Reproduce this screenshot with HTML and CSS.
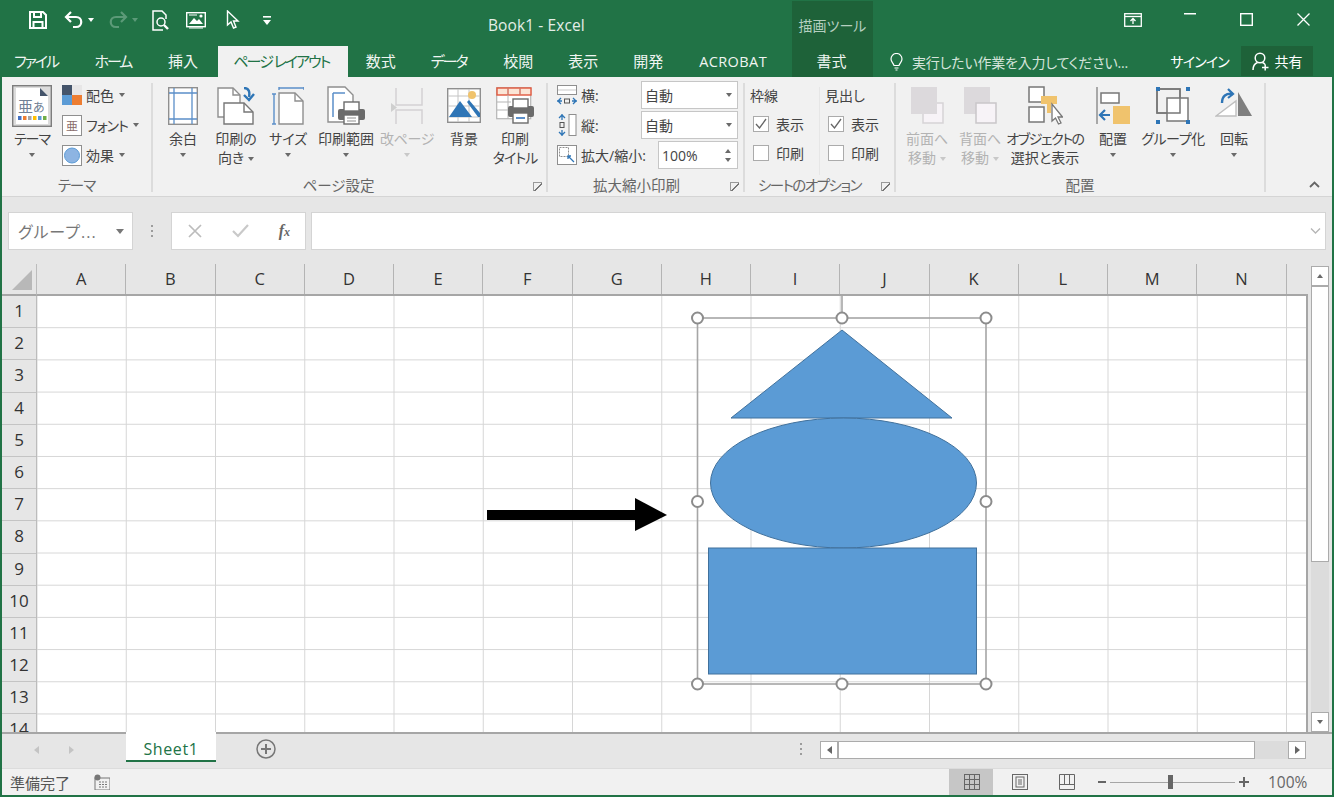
FILE: index.html
```html
<!DOCTYPE html>
<html lang="ja">
<head>
  <meta charset="UTF-8" />
  <title>Book1 - Excel</title>
  <link rel="stylesheet" href="styles.css">
</head>
<body>
<div class="app">

  <!-- title bar and tabs -->
  <div class="top">
    <div class="context">描画ツール</div>
    <div class="titlebar">
      <div class="qat">
        <svg width="18" height="18" viewBox="0 0 18 18" fill="none" stroke="#fff" stroke-width="2"><path d="M1 1h13l3 3v13H1z"/><path d="M5 1v5h7V1M4.500 17v-6h9v6"/></svg>
        <svg width="20" height="18" viewBox="0 0 20 18" fill="none" stroke="#fff" stroke-width="2.200"><path d="M7 1 2 6l5 5"/><path d="M2 6h10c7 0 7 10 0 10H9"/></svg>
        <i class="caret caret-white"></i>
        <svg width="20" height="18" viewBox="0 0 20 18" fill="none" stroke="#5c9a78" stroke-width="2.200"><path d="m13 1 5 5-5 5"/><path d="M18 6H8c-7 0-7 10 0 10h3"/></svg>
        <i class="caret caret-dim"></i>
        <svg width="18" height="21" viewBox="0 0 18 21" fill="none" stroke="#fff" stroke-width="1.500"><path d="M11 20H1V1h9l4 4v4"/><circle cx="9" cy="12" r="4"/><path d="m12 15 4 4" stroke-width="2.400"/></svg>
        <svg width="20" height="17" viewBox="0 0 20 17"><rect x=".7" y=".7" width="18.600" height="14" fill="none" stroke="#fff" stroke-width="1.400"/><path d="M3 12 8 6l3 3 2-2 4 5z" fill="#fff"/><circle cx="15" cy="4" r="1.600" fill="#fff"/><path d="M3 3h8M3 16h14" stroke="#fff"/></svg>
        <svg width="14" height="20" viewBox="0 0 14 20" fill="none" stroke="#fff" stroke-width="1.400"><path d="M1.500 1v14l3.500-3 2.500 6 2.500-1-2.500-6h4.500z"/></svg>
        <svg class="qat-more" width="8" height="9" viewBox="0 0 8 9" fill="#fff"><rect width="8" height="1.600"/><path d="M0 4h8L4 9z"/></svg>
      </div>
      <div class="doc-title">Book1 - Excel</div>
      <div class="win-btns">
        <span><svg width="18" height="14" viewBox="0 0 18 14" fill="none" stroke="#fff" stroke-width="1.300"><rect x=".7" y=".7" width="16.600" height="12.600"/><path d="M1 3.500h16"/><path d="M9 11V6M6.500 8 9 5.500 11.500 8"/></svg></span>
        <span class="win-min"><svg width="12" height="2" viewBox="0 0 12 2"><rect width="12" height="1.500" fill="#fff"/></svg></span>
        <span><svg width="13" height="13" viewBox="0 0 13 13"><rect x=".7" y=".7" width="11.600" height="11.600" fill="none" stroke="#fff" stroke-width="1.400"/></svg></span>
        <span><svg width="13" height="13" viewBox="0 0 13 13" stroke="#fff" stroke-width="1.300"><path d="m.5.500 12 12M12.500.500l-12 12"/></svg></span>
      </div>
    </div>
    <div class="tabs">
      <div class="tabs-main">
        <div class="tab tab-kana">ファイル</div>
        <div class="tab tab-kana">ホーム</div>
        <div class="tab">挿入</div>
        <div class="tab tab-kana tab-active">ページ レイアウト</div>
        <div class="tab">数式</div>
        <div class="tab tab-kana">データ</div>
        <div class="tab">校閲</div>
        <div class="tab">表示</div>
        <div class="tab">開発</div>
        <div class="tab tab-latin">ACROBAT</div>
      </div>
      <div class="tab tab-format">書式</div>
      <div class="tell-me">
        <svg width="13" height="18" viewBox="0 0 13 18" fill="none" stroke="#fff" stroke-width="1.200"><path d="M4 12.500C3.500 10 1 9 1 6a5.500 5.500 0 0 1 11 0c0 3-2.500 4-3 6.500z"/><path d="M4.500 15h4M5.500 17h2"/></svg>
        <span>実行したい作業を入力してください...</span>
      </div>
      <div class="signin">サインイン</div>
      <div class="share">
        <svg width="17" height="19" viewBox="0 0 17 19" fill="none" stroke="#fff" stroke-width="1.500"><circle cx="8" cy="6" r="4.800"/><path d="M1 18c0-4 2-6.500 4.500-7.500M10.500 10.500c1 .4 2 1 2.500 2M10 15.500h6.500M13.200 12.500v6"/></svg>
        <span>共有</span>
      </div>
    </div>
  </div>

  <!-- ribbon -->
  <div class="ribbon">
    <div class="group group-theme">
      <div class="group-body">
        <div class="big big-theme">
          <div class="big-icon">
            <svg width="40" height="42" viewBox="0 0 40 42">
              <rect x=".7" y=".7" width="38.600" height="40.600" fill="#dcdcdc" stroke="#7d7d7d" stroke-width="1.400"/>
              <path d="M4 3h24l8 8v28H4z" fill="#fff"/><path d="M28 3l8 8h-8z" fill="#44546a"/>
              <text x="6" y="27" class="theme-a">亜</text><text x="21" y="27" class="theme-b">あ</text>
              <g><rect x="6" y="31" width="3.500" height="4" fill="#4472c4"/><rect x="11" y="31" width="3.500" height="4" fill="#ed7d31"/><rect x="16" y="31" width="3.500" height="4" fill="#a5a5a5"/><rect x="21" y="31" width="3.500" height="4" fill="#ffc000"/><rect x="26" y="31" width="3.500" height="4" fill="#5b9bd5"/><rect x="31" y="31" width="3.500" height="4" fill="#70ad47"/></g>
            </svg>
          </div>
          <div class="big-label tight">テーマ</div>
          <i class="caret caret-block"></i>
        </div>
        <div class="small-list">
          <div class="small-row">
            <svg width="20" height="20" viewBox="0 0 20 20"><rect width="10" height="10" fill="#44546a"/><rect x="10" width="10" height="10" fill="#e7e6e6"/><rect y="10" width="10" height="10" fill="#5b9bd5"/><rect x="10" y="10" width="10" height="10" fill="#ed7d31"/></svg>
            <span>配色</span><i class="caret"></i>
          </div>
          <div class="small-row">
            <svg width="20" height="21" viewBox="0 0 20 21"><rect x=".5" y=".5" width="19" height="20" fill="#fff" stroke="#8f8f8f"/><text x="4" y="15.500" class="font-glyph">亜</text></svg>
            <span class="tight">フォント</span><i class="caret"></i>
          </div>
          <div class="small-row">
            <svg width="20" height="21" viewBox="0 0 20 21"><rect x=".5" y=".5" width="19" height="20" fill="#fff" stroke="#8f8f8f"/><circle cx="10" cy="10.500" r="7.500" fill="#8db4e2" stroke="#5b9bd5"/></svg>
            <span>効果</span><i class="caret"></i>
          </div>
        </div>
      </div>
      <div class="group-label">テーマ</div>
    </div>

    <div class="group group-page">
      <div class="group-body">
        <div class="big">
          <div class="big-icon">
            <svg width="30" height="38" viewBox="0 0 30 38" fill="none"><rect x=".7" y=".7" width="28.600" height="36.600" fill="#fff" stroke="#8f8f8f" stroke-width="1.400"/><path d="M6 1v36M24 1v36M1 6h28M1 32h28" stroke="#5b8fc9" stroke-width="1.300"/></svg>
          </div>
          <div class="big-label">余白</div>
          <i class="caret caret-block"></i>
        </div>
        <div class="big">
          <div class="big-icon">
            <svg width="38" height="38" viewBox="0 0 38 38" fill="none"><path d="M1 1h15l7 7v22H1z" fill="#fff" stroke="#8f8f8f" stroke-width="1.400"/><path d="M7 16h20l9 9v12H7z" fill="#fff" stroke="#777" stroke-width="1.400"/><path d="M27 16v9h9" stroke="#777" stroke-width="1.400"/><path d="M16 1v7h7" stroke="#8f8f8f" stroke-width="1.400"/><path d="M27 1c5 0 6 4 5 9" stroke="#2e75b6" stroke-width="2.400"/><path d="m27 8 5 5 5-6" stroke="#2e75b6" stroke-width="2.400"/></svg>
          </div>
          <div class="big-label">印刷の<br>向き<i class="caret caret-inline"></i></div>
        </div>
        <div class="big">
          <div class="big-icon">
            <svg width="32" height="38" viewBox="0 0 32 38" fill="none"><path d="M7 6h16l8 8v23H7z" fill="#fff" stroke="#8f8f8f" stroke-width="1.400"/><path d="M23 6v8h8" stroke="#8f8f8f" stroke-width="1.400"/><path d="M7 1h25M7 0v3M32 0v3M2 7v30M0 7h4M0 37h4" stroke="#5b8fc9" stroke-width="1.400"/></svg>
          </div>
          <div class="big-label">サイズ</div>
          <i class="caret caret-block"></i>
        </div>
        <div class="big">
          <div class="big-icon">
            <svg width="38" height="39" viewBox="0 0 38 39" fill="none"><path d="M1 1h17l8 8v27H1z" fill="#fff" stroke="#8f8f8f" stroke-width="1.400"/><path d="M6 7h12M6 7v24" stroke="#5b8fc9" stroke-width="1.500"/><rect x="11" y="23" width="27" height="11" rx="2" fill="#6b6b6b"/><rect x="17" y="16" width="15" height="9" fill="#fff" stroke="#6b6b6b" stroke-width="1.400"/><rect x="17" y="29" width="15" height="9" fill="#fff" stroke="#6b6b6b" stroke-width="1.400"/><path d="M20 32h9M20 35h9" stroke="#8f8f8f"/></svg>
          </div>
          <div class="big-label">印刷範囲</div>
          <i class="caret caret-block"></i>
        </div>
        <div class="big big-off">
          <div class="big-icon">
            <svg width="32" height="38" viewBox="0 0 32 38" fill="none" stroke="#d3d1d3" stroke-width="1.500"><path d="M5 1v17h26V1M5 37V23h26v14"/><path d="M0 16l6 4.500-6 4.500z" fill="#cfcfcf" stroke="none"/></svg>
          </div>
          <div class="big-label tight-s">改ページ</div>
          <i class="caret caret-block"></i>
        </div>
        <div class="big">
          <div class="big-icon">
            <svg width="34" height="35" viewBox="0 0 34 35" fill="none"><rect x=".7" y=".7" width="32.600" height="33.600" fill="#fff" stroke="#8f8f8f" stroke-width="1.400"/><path d="M1 8h32M1 18h32M1 29h32M11 1v33M22 1v33" stroke="#c4c4c4"/><path d="M2 29 13 13l12 16z" fill="#2e75b6"/><path d="m20 14 2-2 11 13v4h-2z" fill="#2e75b6"/><circle cx="25" cy="7" r="4" fill="#f0c36d"/></svg>
          </div>
          <div class="big-label">背景</div>
        </div>
        <div class="big">
          <div class="big-icon">
            <svg width="38" height="38" viewBox="0 0 38 38" fill="none"><rect x=".7" y=".7" width="34" height="31" fill="#fff" stroke="#b5b5b5" stroke-width="1.200"/><rect x="1" y="1" width="34" height="7" fill="#fbe5d6" stroke="#e2583e" stroke-width="1.400"/><path d="M12 1v31M24 1v7M1 15h14M1 23h11" stroke="#b5b5b5"/><path d="M12 1v7M24 1v7" stroke="#e2583e"/><rect x="12" y="19" width="26" height="11" rx="2" fill="#6b6b6b"/><rect x="17" y="12" width="15" height="9" fill="#fff" stroke="#6b6b6b" stroke-width="1.400"/><rect x="17" y="26" width="15" height="10" fill="#fff" stroke="#6b6b6b" stroke-width="1.400"/><path d="M20 31h9" stroke="#5b8fc9" stroke-width="2"/></svg>
          </div>
          <div class="big-label">印刷<br><span class="tight">タイトル</span></div>
        </div>
      </div>
      <div class="group-label">ページ設定</div>
      <i class="launcher"></i>
    </div>

    <div class="group group-scale">
      <div class="group-body">
        <div class="scale-row">
          <svg width="20" height="20" viewBox="0 0 20 20" fill="none"><rect x=".5" y=".5" width="19" height="9" fill="#fff" stroke="#8f8f8f"/><path d="M1 5h18" stroke="#c9c9c9"/><path d="M0 16h5M1 16l3-3M1 16l3 3M15 16h5M19 16l-3-3M19 16l-3 3" stroke="#2e75b6" stroke-width="1.300"/><rect x="7.500" y="14" width="5" height="4" stroke="#555"/></svg>
          <span>横:</span>
          <div class="combo">自動<i class="caret"></i></div>
        </div>
        <div class="scale-row">
          <svg width="20" height="22" viewBox="0 0 20 22" fill="none"><rect x="12" y=".5" width="7" height="21" fill="#fff" stroke="#8f8f8f"/><path d="M5 0v6M5 1 2 4M5 1l3 3M5 16v6M5 21l-3-3M5 21l3-3" stroke="#2e75b6" stroke-width="1.300"/><rect x="3" y="8.500" width="4" height="5" stroke="#555"/></svg>
          <span>縦:</span>
          <div class="combo">自動<i class="caret"></i></div>
        </div>
        <div class="scale-row">
          <svg width="20" height="20" viewBox="0 0 20 20" fill="none"><rect x=".5" y=".5" width="19" height="19" fill="#fff" stroke="#8f8f8f"/><rect x="2.500" y="2.500" width="9" height="9" stroke="#8f8f8f" stroke-dasharray="2 1"/><path d="m11 11 6 6M11 14v-3h3" stroke="#2e75b6" stroke-width="1.300"/></svg>
          <span>拡大/縮小:</span>
          <div class="combo combo-spin">100%
            <span class="spin"><i class="caret caret-up"></i><i class="caret"></i></span>
          </div>
        </div>
      </div>
      <div class="group-label">拡大縮小印刷</div>
      <i class="launcher"></i>
    </div>

    <div class="group group-sheet">
      <div class="group-body">
        <div class="opt-col">
          <div class="opt-title">枠線</div>
          <label class="check"><i class="box"><svg width="12" height="11" viewBox="0 0 12 11" fill="none" stroke="#666" stroke-width="1.300"><path d="m1 6 3.500 4L11 1"/></svg></i>表示</label>
          <label class="check"><i class="box"></i>印刷</label>
        </div>
        <div class="opt-col opt-col-2">
          <div class="opt-title">見出し</div>
          <label class="check"><i class="box"><svg width="12" height="11" viewBox="0 0 12 11" fill="none" stroke="#666" stroke-width="1.300"><path d="m1 6 3.500 4L11 1"/></svg></i>表示</label>
          <label class="check"><i class="box"></i>印刷</label>
        </div>
      </div>
      <div class="group-label">シートのオプション</div>
      <i class="launcher"></i>
    </div>

    <div class="group group-arrange">
      <div class="group-body">
        <div class="big big-off">
          <div class="big-icon">
            <svg width="33" height="37" viewBox="0 0 33 37" fill="none"><rect x="12" y="16" width="20" height="20" fill="#f7f3f7" stroke="#d6d3d6" stroke-width="1.500"/><rect width="26" height="27" fill="#dcd9dc"/></svg>
          </div>
          <div class="big-label">前面へ<br>移動<i class="caret caret-inline"></i></div>
        </div>
        <div class="big big-off">
          <div class="big-icon">
            <svg width="33" height="37" viewBox="0 0 33 37" fill="none"><rect width="26" height="27" fill="#dcd9dc"/><rect x="12" y="16" width="20" height="20" fill="#f7f3f7" stroke="#c9c6c9" stroke-width="1.500"/></svg>
          </div>
          <div class="big-label">背面へ<br>移動<i class="caret caret-inline"></i></div>
        </div>
        <div class="big">
          <div class="big-icon">
            <svg width="36" height="39" viewBox="0 0 36 39" fill="none"><rect x="2" y="1" width="15" height="15" fill="#fff" stroke="#777" stroke-width="1.500"/><rect x="2" y="21" width="15" height="15" fill="#fff" stroke="#777" stroke-width="1.500"/><path d="M14 10h16v8h-6v9h-4v-9h-6z" fill="#f0c36d"/><path d="M25 18v17l3.500-3 3 6 2.500-1-3-6h4.500z" fill="#fff" stroke="#777" stroke-width="1.300"/></svg>
          </div>
          <div class="big-label"><span class="tight-l">オブジェクトの</span><br>選択と表示</div>
        </div>
        <div class="big">
          <div class="big-icon">
            <svg width="34" height="37" viewBox="0 0 34 37" fill="none"><path d="M1 0v37" stroke="#8f8f8f" stroke-width="1.500"/><rect x="5" y="6" width="18" height="10" fill="#fff" stroke="#777" stroke-width="1.500"/><rect x="17" y="19" width="17" height="18" fill="#f0c36d"/><path d="M14 28H5M9 23l-5 5 5 5" stroke="#2e75b6" stroke-width="2.200"/></svg>
          </div>
          <div class="big-label">配置</div>
          <i class="caret caret-block"></i>
        </div>
        <div class="big">
          <div class="big-icon">
            <svg width="34" height="37" viewBox="0 0 34 37" fill="none" stroke="#777" stroke-width="1.500"><rect x="1" y="2" width="23" height="24" /><rect x="11" y="11" width="21" height="23" fill="#fff"/><rect x="1" y="2" width="23" height="24"/><g fill="#2e75b6" stroke="none"><rect width="4" height="4"/><rect x="30" width="4" height="4"/><rect y="33" width="4" height="4"/><rect x="30" y="33" width="4" height="4"/></g></svg>
          </div>
          <div class="big-label tight-s">グループ化</div>
          <i class="caret caret-block"></i>
        </div>
        <div class="big">
          <div class="big-icon">
            <svg width="38" height="36" viewBox="0 0 38 36" fill="none"><path d="M23 4 37 28H23z" fill="#7f7f7f"/><path d="M1 28 21 13v15z" fill="#fff" stroke="#bfbfbf" stroke-width="1.400"/><path d="M7 15c0-7 4-10 11-9" stroke="#2e75b6" stroke-width="2.400"/><path d="m13 1 5 5-5 4" stroke="#2e75b6" stroke-width="2.200"/></svg>
          </div>
          <div class="big-label">回転</div>
          <i class="caret caret-block"></i>
        </div>
      </div>
      <div class="group-label">配置</div>
    </div>

    <div class="ribbon-end">
      <svg width="11" height="7" viewBox="0 0 11 7" fill="none" stroke="#666" stroke-width="1.800"><path d="m1 6 4.500-4.500L10 6"/></svg>
    </div>
  </div>

  <!-- formula bar -->
  <div class="formula-bar">
    <div class="name-box">グループ...<i class="caret caret-big"></i></div>
    <div class="grip"><b></b><b></b><b></b></div>
    <div class="fx-box">
      <svg width="14" height="14" viewBox="0 0 14 14" stroke="#bcbcbc" stroke-width="1.700"><path d="m1 1 12 12M13 1 1 13"/></svg>
      <svg width="17" height="14" viewBox="0 0 17 14" fill="none" stroke="#c9c9c9" stroke-width="2.200"><path d="m1 7 5 5L16 1"/></svg>
      <span class="fx">f<small>x</small></span>
    </div>
    <div class="formula-input">
      <svg width="11" height="6" viewBox="0 0 11 6" fill="none" stroke="#b5b5b5" stroke-width="1.300"><path d="m1 .500 4.500 4.500L10 .500"/></svg>
    </div>
  </div>

  <!-- sheet -->
  <div class="sheet">
    <div class="corner"><i></i></div>
    <div class="col-heads">
      <span>A</span><span>B</span><span>C</span><span>D</span><span>E</span><span>F</span><span>G</span>
      <span>H</span><span>I</span><span>J</span><span>K</span><span>L</span><span>M</span><span>N</span>
    </div>
    <div class="row-heads">
      <span>1</span><span>2</span><span>3</span><span>4</span><span>5</span><span>6</span><span>7</span>
      <span>8</span><span>9</span><span>10</span><span>11</span><span>12</span><span>13</span><span>14</span>
    </div>
    <div class="grid">
      <svg class="shapes" width="1269" height="436" viewBox="37 296 1269 436">
        <path d="M487 515H636" stroke="#000" stroke-width="10"/>
        <path d="M635 498l32 17-32 16z" fill="#000"/>
        <g fill="#5b9bd5" stroke="#41719c">
          <path d="M842 330 952 418H731z"/>
          <ellipse cx="843.500" cy="483" rx="133" ry="65"/>
          <rect x="708.500" y="548" width="268" height="126"/>
        </g>
        <g fill="none" stroke="#a6a6a6" stroke-width="1.600">
          <path d="M842 296v22"/>
          <rect x="697.500" y="318" width="288.500" height="366"/>
        </g>
        <g fill="#fff" stroke="#8c8c8c" stroke-width="2">
          <circle cx="697.500" cy="318" r="5.500"/><circle cx="842" cy="318" r="5.500"/><circle cx="986" cy="318" r="5.500"/>
          <circle cx="697.500" cy="501.500" r="5.500"/><circle cx="986" cy="501.500" r="5.500"/>
          <circle cx="697.500" cy="684" r="5.500"/><circle cx="842" cy="684" r="5.500"/><circle cx="986" cy="684" r="5.500"/>
        </g>
      </svg>
    </div>
    <div class="vscroll">
      <div class="sb-btn sb-btn-tall"><i class="caret caret-up caret-dark"></i></div>
      <div class="sb-thumb"></div>
      <div class="sb-track"></div>
      <div class="sb-btn sb-btn-tall"><i class="caret caret-dark"></i></div>
    </div>
  </div>

  <!-- sheet tabs -->
  <div class="sheet-bar">
    <div class="sheet-nav"><i class="arrow-left"></i><i class="arrow-right"></i></div>
    <div class="sheet-tab">Sheet1</div>
    <div class="add-sheet">
      <svg width="20" height="20" viewBox="0 0 20 20" fill="none" stroke="#777"><circle cx="10" cy="10" r="9" stroke-width="1.500"/><path d="M10 5v10M5 10h10" stroke-width="2"/></svg>
    </div>
    <div class="grip grip-bar"><b></b><b></b><b></b></div>
    <div class="hscroll">
      <div class="sb-btn"><i class="arrow-left arrow-dark"></i></div>
      <div class="hs-thumb"></div>
      <div class="hs-track"></div>
      <div class="sb-btn"><i class="arrow-right arrow-dark"></i></div>
    </div>
  </div>

  <!-- status bar -->
  <div class="status">
    <span class="ready">準備完了</span>
    <svg width="16" height="16" viewBox="0 0 16 16"><rect x="1" y="4" width="15" height="12" fill="none" stroke="#777"/><circle cx="3.500" cy="3.500" r="3" fill="#777"/><path d="M5 8h9M5 10.500h9M5 13h9" stroke="#777" stroke-dasharray="2 1"/></svg>
    <div class="views">
      <span class="view view-on"><svg width="16" height="16" viewBox="0 0 16 16" fill="none" stroke="#666"><rect x=".5" y=".5" width="15" height="15"/><path d="M.5 5.500h15M.5 10.500h15M5.500.5v15M10.500.5v15"/></svg></span>
      <span class="view"><svg width="16" height="16" viewBox="0 0 16 16" fill="none" stroke="#666"><rect x=".5" y=".5" width="15" height="15"/><rect x="4" y="3" width="8" height="10"/><path d="M6 6h4M6 8h4M6 10h4"/></svg></span>
      <span class="view"><svg width="16" height="16" viewBox="0 0 16 16" fill="none" stroke="#666"><path d="M.5.500h15v15H.5zM.5 10.500h15M5.500.5v10M10.500.5v10"/></svg></span>
    </div>
    <div class="zoom">
      <b class="zoom-minus"></b>
      <div class="slider"><i></i></div>
      <b class="zoom-plus"></b>
    </div>
    <span class="zoom-pct">100%</span>
  </div>
</div>
</body>
</html>
```

FILE: styles.css
```css
* {
  box-sizing: border-box;
}
html, body {
  margin: 0;
  padding: 0;
}
body {
  font-family: "Open Sans", "Noto Sans CJK JP", sans-serif;
  font-feature-settings: "palt";
  font-size: 14px;
  color: #444;
  overflow: hidden;
}
i, b {
  display: block;
  font-style: normal;
}
svg {
  display: block;
  flex: none;
}
.tight { letter-spacing: -1px; }
.tight-s { letter-spacing: -.4px; }
.tight-l { letter-spacing: -1.4px; }
.app {
  width: 1334px;
  height: 797px;
  border: 2px solid #217346;
  border-top: 0;
  background: #e6e6e6;
  display: flex;
  flex-direction: column;
  overflow: hidden;
}

/* carets */
.caret {
  width: 0;
  height: 0;
  flex: none;
  border-left: 3.5px solid transparent;
  border-right: 3.5px solid transparent;
  border-top: 4px solid #6a6a6a;
}
.caret-white { border-top-color: #fff; }
.caret-dim { border-top-color: #5c9a78; }
.caret-dark { border-top-color: #666; }
.caret-up {
  border-top: 0;
  border-bottom: 4px solid #6a6a6a;
}
.caret-big {
  border-left-width: 4px;
  border-right-width: 4px;
  border-top-width: 5px;
  border-top-color: #777;
}
.caret-block { margin-top: 5px; }
.caret-inline {
  display: inline-block;
  vertical-align: middle;
  margin-left: 4px;
}
.big-off .caret {
  border-top-color: #c8c8c8;
}

/* title bar */
.top {
  position: relative;
  height: 77px;
  background: #217346;
  color: #fff;
}
.context {
  position: absolute;
  left: 790px;
  top: 1px;
  bottom: 0;
  width: 81px;
  background: #1e6239;
  color: #b5cfc0;
  text-align: center;
  line-height: 50px;
  font-size: 14px;
}
.titlebar {
  position: relative;
  height: 46px;
  display: flex;
  align-items: center;
}
.qat {
  width: 486px;
  padding-left: 27px;
  display: grid;
  grid-template-columns: 35px 24px 20px 24px 20px 34px 40px 37px auto;
  align-items: center;
  justify-items: start;
  margin-top: -6px;
}
.doc-title {
  font-size: 15.5px;
  letter-spacing: .1px;
  color: #e4eee8;
  margin-top: 3px;
}
.win-btns {
  margin-left: auto;
  display: flex;
  margin-top: -6px;
}
.win-btns span {
  width: 57px;
  display: flex;
  justify-content: center;
}
.tabs {
  position: relative;
  height: 31px;
  display: flex;
  align-items: stretch;
}
.tabs-main {
  width: 790px;
  padding-left: 12px;
  display: flex;
  align-items: stretch;
}
.tab {
  padding: 0 17.5px;
  font-size: 15px;
  line-height: 31px;
  color: #f0f5f2;
  white-space: nowrap;
}
.tab:first-child {
  padding-left: 0;
}
.tab-kana {
  letter-spacing: -2px;
  padding-right: 19px;
}
.tab-latin {
  font-size: 14.5px;
  letter-spacing: .4px;
  margin-left: 1px;
}
.tab-active {
  margin-left: 3px;
  padding: 0 19px 0 15px;
  background: #f1f1f1;
  color: #217346;
}
.tab-format {
  width: 81px;
  padding: 0 2px 0 0;
  text-align: center;
}
.tell-me {
  margin-left: 17px;
  display: flex;
  align-items: center;
  gap: 9px;
  color: #d5e4db;
  letter-spacing: -.2px;
}
.signin {
  margin-left: auto;
  line-height: 31px;
  margin-right: 12px;
  letter-spacing: -.8px;
}
.share {
  width: 72px;
  height: 30px;
  margin-right: 19px;
  background: #1e6239;
  display: flex;
  align-items: center;
  justify-content: center;
  gap: 6px;
}

/* ribbon */
.ribbon {
  height: 120px;
  background: #f1f1f1;
  border-bottom: 1px solid #d5d5d5;
  padding: 6px 0 4px;
  display: flex;
}
.group {
  position: relative;
  flex: none;
  border-right: 2px solid #dcdcdc;
  display: flex;
  flex-direction: column;
}
.group-body {
  height: 92px;
  flex: none;
}
.group-label {
  padding-top: 3px;
  text-align: center;
  font-size: 14.5px;
  line-height: 16px;
  color: #666;
  white-space: nowrap;
}
.group-page .group-label { padding-right: 22px; }
.group-scale .group-label { padding-right: 18px; }
.group-sheet .group-label {
  padding-right: 20px;
  letter-spacing: -1.5px;
}
.group-theme .group-label { letter-spacing: -1px; }
.group-theme { width: 151px; }
.group-page { width: 395px; }
.group-scale { width: 197px; }
.group-sheet { width: 151px; }
.group-arrange { width: 370px; }
.group-theme .group-body {
  display: flex;
}
.group-page .group-body {
  padding-left: 4px;
  display: grid;
  grid-template-columns: 52px 54px 50px 66px 56px 58px 44px;
}
.group-arrange .group-body {
  padding-left: 5px;
  display: grid;
  grid-template-columns: 52px 54px 76px 60px 60px 62px;
}
.big {
  display: flex;
  flex-direction: column;
  align-items: center;
  white-space: nowrap;
}
.big-theme {
  width: 60px;
}
.big-icon {
  height: 45px;
  display: flex;
  align-items: center;
}
.big-label {
  text-align: center;
  line-height: 19px;
  margin-top: 1px;
}
.big-off {
  color: #b3b3b3;
}
.theme-a {
  font-size: 15px;
  fill: #6f7f95;
  font-family: "Noto Sans CJK JP", sans-serif;
}
.theme-b {
  font-size: 12px;
  fill: #6f7f95;
  font-family: "Noto Sans CJK JP", sans-serif;
}
.font-glyph {
  font-size: 12px;
  fill: #8a6d6d;
  font-family: "Noto Sans CJK JP", sans-serif;
}
.small-list {
  padding-top: 2px;
}
.small-row {
  height: 30px;
  display: flex;
  align-items: flex-start;
  gap: 4px;
  white-space: nowrap;
}
.small-row span {
  line-height: 21px;
}
.small-row .caret {
  margin: 8px 0 0 1px;
}
.launcher {
  position: absolute;
  right: 4px;
  bottom: 1px;
  width: 9px;
  height: 9px;
  border-left: 1px solid #999;
  border-top: 1px solid #999;
  background: linear-gradient(135deg, transparent 45%, #777 45%, #777 60%, transparent 60%);
}

.group-scale .group-body {
  padding: 0 5px 0 9px;
  margin-top: -3px;
  margin-bottom: 3px;
}
.scale-row {
  height: 30px;
  display: flex;
  align-items: center;
  gap: 4px;
}
.combo {
  margin-left: auto;
  width: 97px;
  height: 28px;
  padding-left: 3px;
  background: #fff;
  border: 1px solid #c6c6c6;
  display: flex;
  align-items: center;
  justify-content: space-between;
}
.combo > .caret {
  margin-right: 5px;
}
.combo-spin {
  width: 80px;
}
.spin {
  display: flex;
  flex-direction: column;
  gap: 5px;
  margin-right: 6px;
}

.group-sheet .group-body {
  padding: 4px 0 0 5px;
  display: flex;
}
.opt-col {
  width: 69px;
}
.opt-col-2 {
  margin-left: 0;
  padding-left: 5px;
  border-left: 1px solid #e6e6e6;
}
.opt-title {
  line-height: 17px;
  margin-bottom: 5px;
}
.check {
  height: 29px;
  padding-left: 3px;
  display: flex;
  align-items: center;
  gap: 7px;
}
.box {
  width: 16px;
  height: 16px;
  background: #fff;
  border: 1px solid #ababab;
  display: flex;
  align-items: center;
  justify-content: center;
}
.ribbon-end {
  flex: 1;
  display: flex;
  justify-content: flex-end;
  align-items: flex-end;
  padding: 0 12px 4px 0;
}

/* formula bar */
.formula-bar {
  height: 67px;
  padding: 15px 6px 14px 6px;
  display: flex;
}
.name-box {
  width: 125px;
  padding: 0 8px 0 9px;
  background: #fff;
  border: 1px solid #d4d4d4;
  display: flex;
  align-items: center;
  justify-content: space-between;
  font-size: 16px;
  letter-spacing: 1px;
  color: #777;
}
.grip {
  width: 38px;
  display: flex;
  flex-direction: column;
  align-items: center;
  justify-content: center;
  gap: 3px;
}
.grip b {
  width: 2px;
  height: 2px;
  background: #9c9c9c;
}
.fx-box {
  width: 135px;
  padding: 0 15px 0 16px;
  background: #fff;
  border: 1px solid #d4d4d4;
  display: flex;
  align-items: center;
  justify-content: space-between;
}
.fx {
  font-family: "Liberation Serif", serif;
  font-style: italic;
  font-weight: bold;
  font-size: 16px;
  color: #666;
}
.fx small {
  font-size: 12px;
}
.formula-input {
  flex: 1;
  margin-left: 5px;
  padding-right: 4px;
  background: #fff;
  border: 1px solid #d4d4d4;
  display: flex;
  align-items: center;
  justify-content: flex-end;
}

/* sheet */
.sheet {
  height: 468px;
  display: grid;
  grid-template-columns: 35px 1271px 24px;
  grid-template-rows: 32px 436px;
  color: #333;
}
.corner {
  border-bottom: 2px solid #a6a6a6;
  border-right: 1px solid #bcbcbc;
  position: relative;
}
.corner i {
  position: absolute;
  left: 10px;
  top: 6px;
  width: 0;
  height: 0;
  border-left: 20px solid transparent;
  border-bottom: 20px solid #b8b8b8;
}
.col-heads {
  display: flex;
  border-bottom: 2px solid #a6a6a6;
  overflow: hidden;
}
.col-heads span {
  flex: 0 0 89.25px;
  font-size: 16.5px;
  text-align: center;
  line-height: 29px;
  border-right: 1px solid #b4b4b4;
}
.row-heads {
  grid-row: 2;
  grid-column: 1;
  display: flex;
  flex-direction: column;
  overflow: hidden;
  border-right: 1px solid #bcbcbc;
}
.row-heads span {
  flex: 0 0 32.2px;
  font-size: 17px;
  line-height: 30px;
  text-align: center;
  border-bottom: 1px solid #c4c4c4;
}
.grid {
  grid-row: 2;
  grid-column: 2;
  position: relative;
  border-right: 2px solid #a6a6a6;
  background-color: #fff;
  background-image:
    linear-gradient(to right, transparent calc(100% - 1.4px), #d6d6d6 0),
    linear-gradient(to bottom, transparent calc(100% - 1.4px), #d6d6d6 0);
  background-size: 89.25px 100%, 100% 32.2px;
  background-position: .5px 0, 0 0;
  overflow: hidden;
}
.shapes {
  position: absolute;
  left: 0;
  top: 0;
}
.vscroll {
  grid-row: 1 / 3;
  grid-column: 3;
  padding: 2px 3px 0 3px;
  display: flex;
  flex-direction: column;
}
.sb-btn {
  flex: none;
  width: 18px;
  height: 18px;
  background: #fff;
  border: 1px solid #ababab;
  display: flex;
  align-items: center;
  justify-content: center;
}
.sb-btn-tall {
  height: 20px;
}
.sb-thumb {
  height: 276px;
  background: #fff;
  border: 1px solid #ababab;
}
.sb-track {
  flex: 1;
  background: #dcdcdc;
}

/* sheet tabs */
.sheet-bar {
  height: 36px;
  border-top: 2px solid #a6a6a6;
  display: flex;
  align-items: flex-start;
}
.sheet-nav {
  width: 124px;
  height: 32px;
  padding-left: 32px;
  display: flex;
  align-items: center;
  gap: 30px;
}
.arrow-left, .arrow-right {
  width: 0;
  height: 0;
  border-top: 4.5px solid transparent;
  border-bottom: 4.5px solid transparent;
}
.arrow-left { border-right: 5px solid #c4c4c4; }
.arrow-right { border-left: 5px solid #c4c4c4; }
.arrow-dark.arrow-left { border-right-color: #666; }
.arrow-dark.arrow-right { border-left-color: #666; }
.sheet-tab {
  width: 90px;
  height: 30px;
  background: #fff;
  border-bottom: 2px solid #217346;
  border-top: 0;
  margin-top: -2px;
  padding-top: 2px;
  text-align: center;
  line-height: 30px;
  font-size: 16px;
  letter-spacing: .6px;
  color: #217346;
}
.add-sheet {
  margin-left: 40px;
  height: 30px;
  display: flex;
  align-items: center;
}
.grip-bar {
  height: 30px;
  margin-left: 506px;
  width: 38px;
}
.hscroll {
  margin-top: 7px;
  display: flex;
}
.hs-thumb {
  width: 417px;
  height: 18px;
  background: #fff;
  border: 1px solid #ababab;
}
.hs-track {
  width: 33px;
  height: 18px;
  background: #dcdcdc;
}

/* status bar */
.status {
  flex: 1;
  background: #f1f1f1;
  border-top: 1px solid #dcdcdc;
  padding-left: 8px;
  display: flex;
  align-items: center;
  color: #555;
}
.ready {
  font-size: 15px;
  width: 84px;
}
.views {
  margin-left: auto;
  display: flex;
  align-self: stretch;
}
.view {
  width: 47px;
  display: flex;
  align-items: center;
  justify-content: center;
}
.view-on {
  width: 44px;
  padding-left: 2px;
  background: #c6c6c6;
  margin-right: 3px;
}
.zoom {
  width: 155px;
  margin-left: 8px;
  display: flex;
  align-items: center;
}
.zoom-minus {
  width: 8px;
  height: 2px;
  background: #666;
}
.slider {
  position: relative;
  width: 125px;
  height: 1px;
  margin: 0 4px;
  background: #a6a6a6;
}
.slider i {
  position: absolute;
  left: 58px;
  top: -7px;
  width: 5px;
  height: 14px;
  background: #666;
}
.zoom-plus {
  width: 10px;
  height: 10px;
  background:
    linear-gradient(#666, #666) center / 10px 2px no-repeat,
    linear-gradient(#666, #666) center / 2px 10px no-repeat;
}
.zoom-pct {
  width: 79px;
  padding-left: 15px;
  font-size: 15.5px;
  color: #666;
}
```
